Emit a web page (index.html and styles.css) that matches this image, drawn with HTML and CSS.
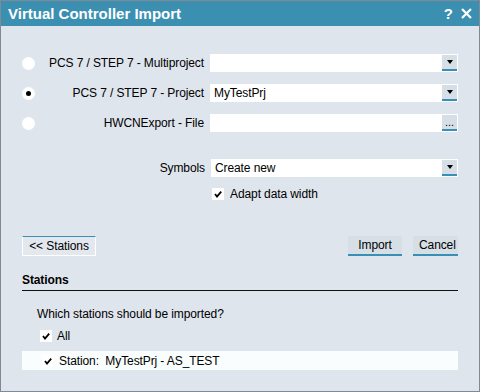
FILE: index.html
```html
<!DOCTYPE html>
<html lang="en">
<head>
  <meta charset="UTF-8">
  <title>Virtual Controller Import</title>
  <link rel="stylesheet" href="styles.css">
</head>
<body>

  <div class="window">
    <div class="titlebar">
      <span class="title">Virtual Controller Import</span>
      <div class="title-buttons">
        <span class="help">?</span>
        <svg class="close" width="11" height="11" viewBox="0 0 11 11">
          <path d="M1 1 L10 10 M10 1 L1 10" stroke="#fff" stroke-width="2.2" fill="none"/>
        </svg>
      </div>
    </div>

    <div class="content">
      <!-- Source selection -->
      <div class="form-grid">
        <span class="radio"></span>
        <label class="field-label">PCS 7 / STEP 7 - Multiproject</label>
        <div class="combo">
          <span class="combo-text"></span>
          <span class="combo-btn"><span class="arrow"></span></span>
        </div>

        <span class="radio checked"></span>
        <label class="field-label">PCS 7 / STEP 7 - Project</label>
        <div class="combo">
          <span class="combo-text">MyTestPrj</span>
          <span class="combo-btn"><span class="arrow"></span></span>
        </div>

        <span class="radio"></span>
        <label class="field-label">HWCNExport - File</label>
        <div class="combo">
          <span class="combo-text"></span>
          <span class="combo-btn dots">...</span>
        </div>
      </div>

      <!-- Options -->
      <div class="form-grid options">
        <span></span>
        <label class="field-label">Symbols</label>
        <div class="combo">
          <span class="combo-text">Create new</span>
          <span class="combo-btn"><span class="arrow"></span></span>
        </div>
      </div>
      <div class="check-row adapt">
        <span class="checkbox"><svg width="12" height="12" viewBox="0 0 12 12"><path d="M3 6 L5 8.5 L9.2 3.6" stroke="#000" stroke-width="1.8" fill="none"/></svg></span>
        <span>Adapt data width</span>
      </div>

      <div class="button-row">
        <button class="btn btn-toggle">&lt;&lt; Stations</button>
        <div class="button-group">
          <button class="btn">Import</button>
          <button class="btn">Cancel</button>
        </div>
      </div>

      <!-- Stations -->
      <div class="section">
        <h3 class="section-title">Stations</h3>
        <p class="question">Which stations should be imported?</p>
        <div class="check-row all">
          <span class="checkbox"><svg width="12" height="12" viewBox="0 0 12 12"><path d="M3 6 L5 8.5 L9.2 3.6" stroke="#000" stroke-width="1.8" fill="none"/></svg></span>
          <span>All</span>
        </div>
        <div class="station-item">
          <span class="checkbox"><svg width="12" height="12" viewBox="0 0 12 12"><path d="M3 6 L5 8.5 L9.2 3.6" stroke="#000" stroke-width="1.8" fill="none"/></svg></span>
          <span>Station:&nbsp; MyTestPrj - AS_TEST</span>
        </div>
      </div>
    </div>
  </div>

</body>
</html>
```

FILE: styles.css
```css
/* Basic Reset */
* {
  box-sizing: border-box;
  margin: 0;
  padding: 0;
}

body {
  font-family: "Liberation Sans", Arial, sans-serif;
  font-size: 12px;
  letter-spacing: -0.1px;
  color: #000;
  background-color: #dfe5ec;
}

.window {
  width: 480px;
  height: 392px;
  border: 1px solid #7f8a95;
  background-color: #dfe5ec;
}

.titlebar {
  height: 25px;
  background-color: #3b90b1;
  color: #fff;
  display: flex;
  align-items: center;
  justify-content: space-between;
  padding: 0 7px 0 7px;
}

.title {
  font-size: 15px;
  font-weight: bold;
  letter-spacing: 0;
}

.title-buttons {
  display: flex;
  align-items: center;
  gap: 8px;
}

.help {
  font-size: 15px;
  font-weight: bold;
  letter-spacing: 0;
}

.content {
  padding: 28px 21px 0 20px;
}

.form-grid {
  display: grid;
  grid-template-columns: 14px 1fr 248px;
  grid-auto-rows: 18px;
  column-gap: 6px;
  row-gap: 12px;
  align-items: center;
}

.field-label {
  text-align: right;
  white-space: nowrap;
}

.radio {
  width: 13px;
  height: 13px;
  margin-left: 1px;
  border-radius: 50%;
  background-color: #fff;
  display: flex;
  align-items: center;
  justify-content: center;
}

.radio.checked::after {
  content: "";
  width: 5px;
  height: 5px;
  border-radius: 50%;
  background-color: #000;
}

.combo {
  height: 18px;
  background-color: #fff;
  display: flex;
  align-items: center;
  justify-content: space-between;
  padding: 1px 1px 1px 4px;
}

.combo-btn {
  width: 15px;
  height: 16px;
  background-color: #d6dee6;
  border-bottom: 2px solid #3a8fb5;
  display: flex;
  align-items: center;
  justify-content: center;
}

.arrow {
  width: 0;
  height: 0;
  border-left: 3.5px solid transparent;
  border-right: 3.5px solid transparent;
  border-top: 4px solid #000;
}

.combo-btn.dots {
  font-size: 11px;
  line-height: 1;
  align-items: flex-end;
  padding-bottom: 1px;
  letter-spacing: 0;
}

.options {
  margin-top: 27px;
  grid-template-columns: 14px 1fr 247px;
}

.check-row {
  display: flex;
  align-items: center;
  gap: 6px;
}

.adapt {
  margin: 10px 0 0 191px;
}

.checkbox {
  width: 12px;
  height: 12px;
  background-color: #fff;
  display: inline-flex;
}

.button-row {
  margin-top: 35px;
  margin-left: 1px;
  display: flex;
  justify-content: space-between;
}

.button-group {
  display: flex;
  gap: 11px;
}

.btn {
  font-family: inherit;
  font-size: 12px;
  letter-spacing: -0.1px;
  height: 20px;
  padding: 0 6px;
  background-color: #d6dee6;
  border: none;
  border-bottom: 2px solid #3a8fb5;
  color: #000;
}

.btn-toggle {
  width: 74px;
  background-color: #e2e8ee;
  border: 1px solid #fff;
  border-top: 1px solid #3a8fb5;
}

.button-group .btn:first-child {
  width: 54px;
}

.button-group .btn:last-child {
  width: 45px;
}

.section {
  margin: 17px 0 0 1px;
}

.section-title {
  font-size: 12px;
  font-weight: bold;
  padding-bottom: 3px;
  border-bottom: 1px solid #111;
}

.question {
  margin: 16px 0 0 15px;
}

.all {
  margin: 8px 0 0 18px;
  gap: 5px;
}

.station-item {
  margin-top: 8px;
  height: 19px;
  background-color: #fafdfe;
  display: flex;
  align-items: center;
  gap: 5px;
  padding-left: 20px;
}
```
